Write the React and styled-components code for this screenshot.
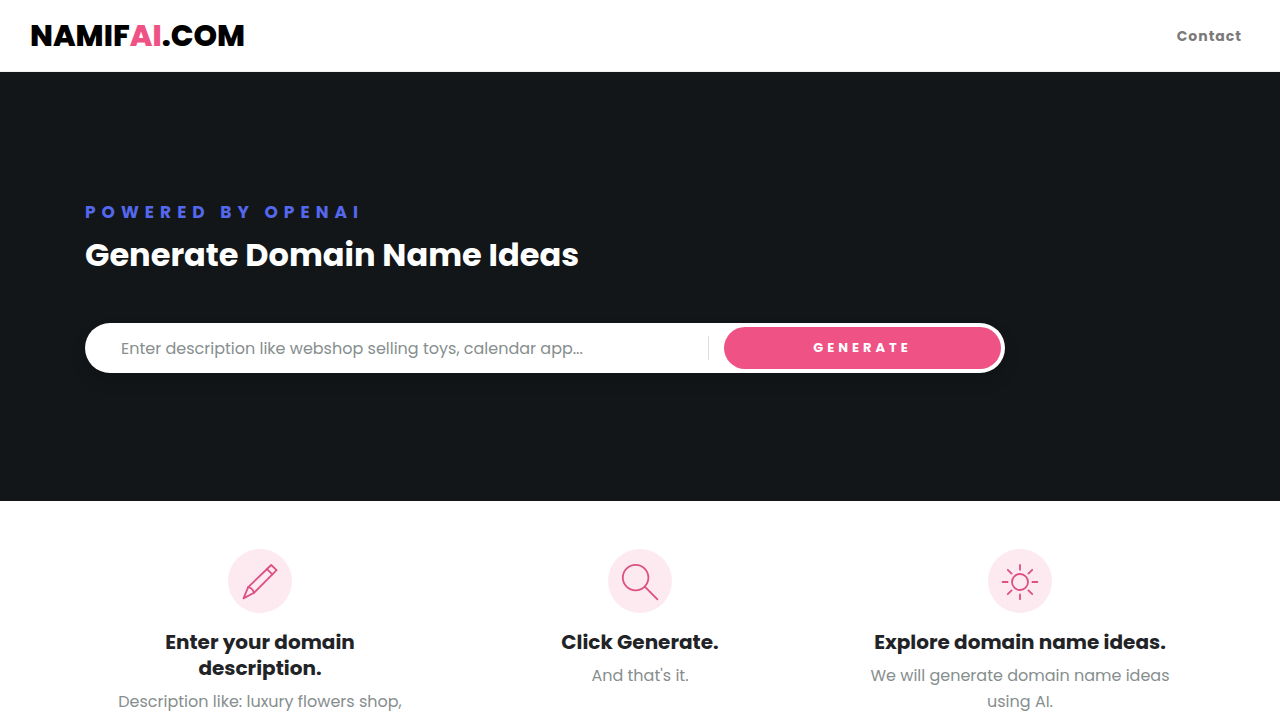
import React from "react";
import styled, { createGlobalStyle } from "styled-components";

const PencilIcon = () => (
  <Icon viewBox="0 0 40 40">
    <path d="M3.5 37.4 L8.2 26.2 L31.2 4 L36.6 9.2 L14 31.8 Z" />
    <path d="M8.2 26.2 Q12.4 27 14 31.8 M27 8.2 L32.4 13.4" />
  </Icon>
);

const SearchIcon = () => (
  <Icon viewBox="0 0 40 40">
    <circle cx="15.6" cy="16.6" r="12.8" />
    <path d="M24.8 25.6 L37.4 38.4" />
  </Icon>
);

const SunIcon = () => (
  <Icon viewBox="0 0 40 40">
    <circle cx="20" cy="21" r="8" />
    <path d="M20 4 V8.8 M20 33.4 V38.2 M2.6 21 H7.6 M32.4 21 H37.4 M7.8 8.8 L11.6 12.6 M32.2 8.8 L28.4 12.6 M7.8 33.2 L11.6 29.4 M32.2 33.2 L28.4 29.4" />
  </Icon>
);

const steps = [
  {
    icon: <PencilIcon />,
    title: "Enter your domain description.",
    text: "Description like: luxury flowers shop,"
  },
  {
    icon: <SearchIcon />,
    title: "Click Generate.",
    text: "And that's it."
  },
  {
    icon: <SunIcon />,
    title: "Explore domain name ideas.",
    text: "We will generate domain name ideas using AI."
  }
];

class App extends React.Component {
  state = {
    description: ""
  };
  render() {
    const { description } = this.state;
    return (
      <>
        <GlobalStyle />
        <Header>
          <Logo href="/">
            NAMIF<LogoAccent>AI</LogoAccent>.COM
          </Logo>
          <nav>
            <NavLink href="/contact">Contact</NavLink>
          </nav>
        </Header>
        <main>
          <Hero>
            <Container>
              <Eyebrow>POWERED BY OPENAI</Eyebrow>
              <Title>Generate Domain Name Ideas</Title>
              <SearchForm onSubmit={this._handleSubmit}>
                <SearchInput
                  type="text"
                  aria-label="Domain description"
                  placeholder="Enter description like webshop selling toys, calendar app..."
                  value={description}
                  onChange={this._handleChange}
                />
                <Divider />
                <GenerateBtn type="submit">GENERATE</GenerateBtn>
              </SearchForm>
            </Container>
          </Hero>
          <Steps>
            {steps.map(step => (
              <Step key={step.title}>
                <IconCircle>{step.icon}</IconCircle>
                <StepTitle>{step.title}</StepTitle>
                <StepText>{step.text}</StepText>
              </Step>
            ))}
          </Steps>
        </main>
      </>
    );
  }
  _handleChange = e => {
    this.setState({ description: e.target.value });
  };
  _handleSubmit = e => {
    e.preventDefault();
  };
}

const GlobalStyle = createGlobalStyle`
  * {
    box-sizing: border-box;
  }
  body {
    margin: 0;
    background-color: white;
    color: #212326;
    font-family: Poppins, Inter, sans-serif;
    font-size: 16px;
    line-height: 26px;
    overflow-x: hidden;
  }
`;

const Header = styled.header`
  display: flex;
  justify-content: space-between;
  align-items: center;
  height: 72px;
  padding: 0 38px 0 30px;
  border-bottom: 1px solid #eeeeee;
`;

const Logo = styled.a`
  color: black;
  font-size: 30px;
  font-weight: 800;
  line-height: 40px;
  text-decoration: none;
`;

const LogoAccent = styled.span`
  color: #ef5285;
`;

const NavLink = styled.a`
  color: #7a7a7a;
  font-size: 14px;
  font-weight: 700;
  letter-spacing: 1px;
  text-decoration: none;
`;

const Hero = styled.section`
  padding: 128px 0;
  background-color: #121618;
`;

const Container = styled.div`
  max-width: 1140px;
  margin: 0 auto;
  padding: 0 15px;
`;

const Eyebrow = styled.p`
  margin: 0 0 10px;
  color: #5468ee;
  font-size: 17px;
  font-weight: 700;
  line-height: 24px;
  letter-spacing: 6px;
`;

const Title = styled.h1`
  margin: 0 0 48px;
  color: white;
  font-size: 32px;
  font-weight: 700;
  line-height: 41px;
`;

const SearchForm = styled.form`
  display: flex;
  align-items: center;
  max-width: 920px;
  height: 50px;
  padding: 4px;
  background-color: white;
  border-radius: 25px;
  box-shadow: rgba(0, 0, 0, 0.15) 0 8px 16px;
`;

const SearchInput = styled.input`
  flex: 1;
  min-width: 0;
  height: 42px;
  padding: 0 32px;
  border: none;
  outline: none;
  background-color: transparent;
  color: #212326;
  font-family: inherit;
  font-size: 16px;

  &::placeholder {
    color: #868e8e;
    opacity: 1;
  }
`;

const Divider = styled.span`
  width: 1px;
  height: 24px;
  margin-right: 15px;
  background-color: #dddddd;
`;

const GenerateBtn = styled.button`
  width: 277px;
  height: 42px;
  padding: 0;
  border: none;
  border-radius: 21px;
  background-color: #ef5285;
  color: white;
  font-family: inherit;
  font-size: 13px;
  font-weight: 700;
  letter-spacing: 4px;
  cursor: pointer;
`;

const Steps = styled.section`
  display: grid;
  grid-template-columns: repeat(auto-fit, minmax(300px, 1fr));
  max-width: 1140px;
  margin: 0 auto;
  padding: 48px 0;
`;

const Step = styled.article`
  display: flex;
  flex-direction: column;
  align-items: center;
  padding: 0 36px;
  text-align: center;
`;

const IconCircle = styled.div`
  display: flex;
  justify-content: center;
  align-items: center;
  width: 64px;
  height: 64px;
  margin-bottom: 16px;
  border-radius: 50%;
  background-color: #fdeaf0;
`;

const Icon = styled.svg`
  width: 40px;
  height: 40px;
  fill: none;
  stroke: #dc5083;
  stroke-width: 1.8;
  stroke-linecap: round;
  stroke-linejoin: round;
`;

const StepTitle = styled.h2`
  margin: 0 0 8px;
  font-size: 20px;
  font-weight: 700;
  line-height: 26px;
`;

const StepText = styled.p`
  margin: 0;
  color: #868e8e;
`;

export default App;
